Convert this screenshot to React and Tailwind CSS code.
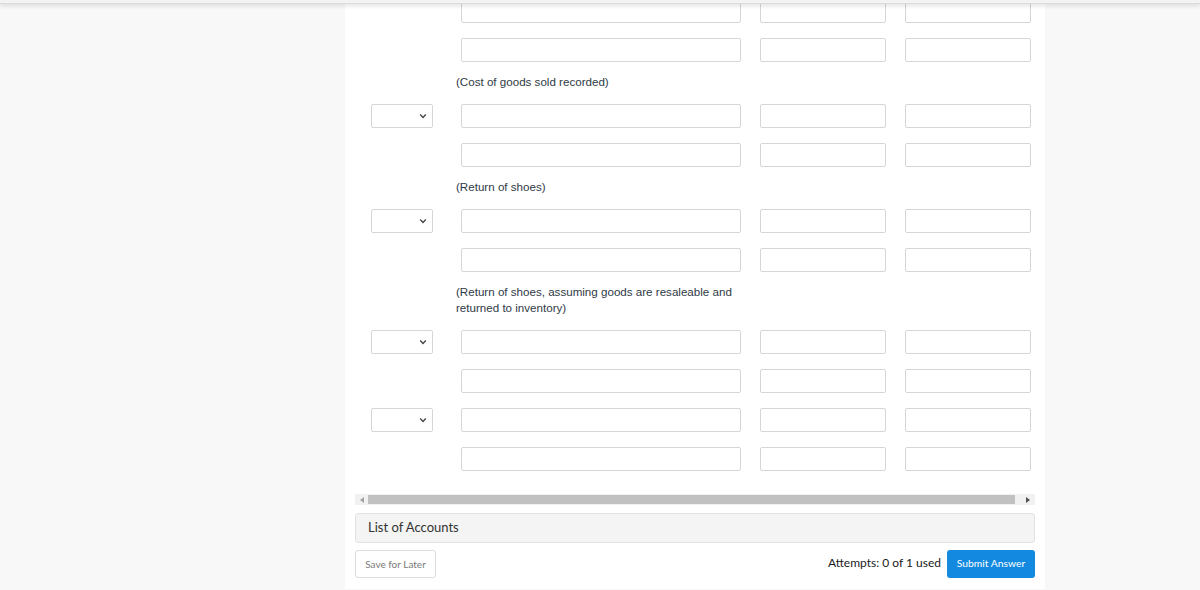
import React from 'react'

const rows = [
    { type: 'row', select: false },
    { type: 'row', select: false },
    { type: 'label', text: '(Cost of goods sold recorded)' },
    { type: 'row', select: true },
    { type: 'row', select: false },
    { type: 'label', text: '(Return of shoes)' },
    { type: 'row', select: true },
    { type: 'row', select: false },
    { type: 'label', text: '(Return of shoes, assuming goods are resaleable and returned to inventory)' },
    { type: 'row', select: true },
    { type: 'row', select: false },
    { type: 'row', select: true },
    { type: 'row', select: false },
]

const Chevron = () => (
    <svg width="8" height="6" viewBox="0 0 8 6" className="text-[#444]">
        <path d="M1.2 1.6 L4 4.4 L6.8 1.6" fill="none" stroke="currentColor" strokeWidth="1.4" />
    </svg>
)

const JournalRow = ({ select, className }) => (
    <div className={`flex h-6 ${className}`}>
        {/* account dropdown */}
        <div className="w-[90px] shrink-0">
            {select && (
                <div className="w-[62px] h-6 border border-[#d6d6d6] rounded-[2px] bg-white flex items-center justify-end pr-[5px]">
                    <Chevron />
                </div>
            )}
        </div>
        <div className="w-[280px] h-6 border border-[#d6d6d6] rounded-[2px] bg-white" />
        <div className="w-[126px] h-6 ml-[19px] border border-[#d6d6d6] rounded-[2px] bg-white" />
        <div className="w-[126px] h-6 ml-[19px] border border-[#d6d6d6] rounded-[2px] bg-white" />
    </div>
)

const App = () => {
    return (
        <div className="relative h-[590px] overflow-hidden bg-[#f8f8f8]">

            {/* top header edge */}
            <div className="absolute top-0 left-0 right-0 h-[4px] bg-[#f3f3f3] border-b border-[#dcdcdc] shadow-[0_2px_4px_rgba(0,0,0,0.12)] z-10" />

            <div className="ml-[345px] w-[700px] h-full bg-white px-[10px]">

                {/* journal table */}
                <div className="pl-4 pb-[23px] -mt-px" style={{ fontFamily: '"Liberation Sans", Arial, sans-serif' }}>
                    {rows.map((r, i) => {
                        const prev = rows[i - 1]
                        if (r.type === 'label') {
                            return (
                                <div key={i} className="mt-3 pl-[85px] w-[375px] text-[11.6px] leading-4 text-[#2f3a46]">
                                    {r.text}
                                </div>
                            )
                        }
                        let mt = ''
                        if (prev) mt = prev.type === 'label' ? 'mt-[14px]' : 'mt-[15px]'
                        return <JournalRow key={i} select={r.select} className={mt} />
                    })}
                </div>

                {/* horizontal scrollbar */}
                <div className="h-[11px] bg-[#f1f1f1] flex items-center">
                    <div className="w-[13px] flex justify-center">
                        <div className="w-0 h-0 border-y-[3px] border-y-transparent border-r-[4px] border-r-[#a3a3a3]" />
                    </div>
                    <div className="h-[9px] w-[647px] bg-[#c1c1c1]" />
                    <div className="flex-1 flex justify-end pr-[5px]">
                        <div className="w-0 h-0 border-y-[3px] border-y-transparent border-l-[4px] border-l-[#505050]" />
                    </div>
                </div>

                <div style={{ fontFamily: 'Lato, "Liberation Sans", sans-serif' }}>
                    {/* list of accounts */}
                    <div className="mt-2 h-[30px] bg-[#f4f4f4] border border-[#e2e2e2] rounded-[3px] flex items-center px-3 text-[13px] text-[#333]">
                        List of Accounts
                    </div>

                    {/* footer actions */}
                    <div className="mt-[7px] flex items-center justify-between">
                        <button className="h-7 w-[81px] border border-[#dcdcdc] rounded-[3px] bg-white text-[10px] text-[#7a7a7a]">
                            Save for Later
                        </button>
                        <div className="flex items-center gap-[6px]">
                            <p className="text-[12px] text-[#1a1a1a] -mt-[3px]">Attempts: 0 of 1 used</p>
                            <button className="h-7 w-[88px] rounded-[3px] bg-[#138ae0] text-[10.3px] text-white">
                                Submit Answer
                            </button>
                        </div>
                    </div>
                </div>

            </div>
        </div>
    )
}

export default App
